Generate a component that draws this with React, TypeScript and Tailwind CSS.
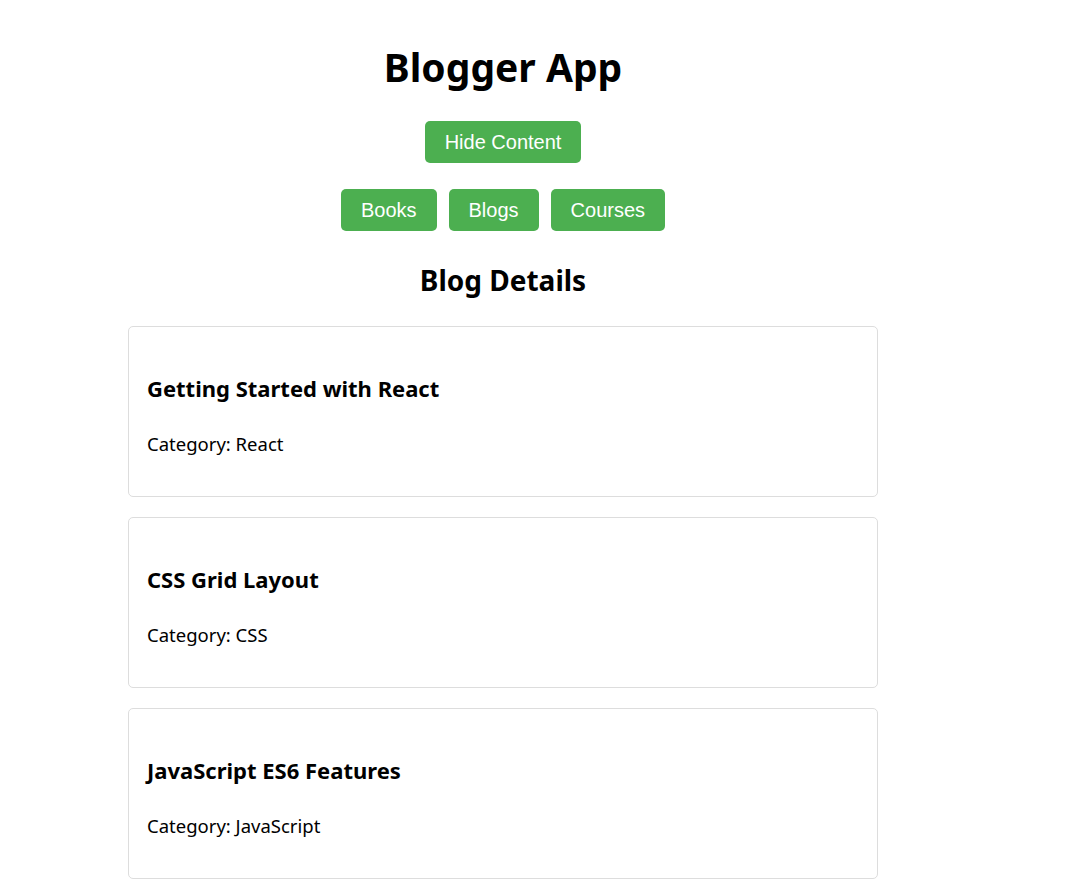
import React, { useState } from 'react';

interface Blog {
  id: number;
  title: string;
  category: string;
}

const blogs: Blog[] = [
  { id: 1, title: 'Getting Started with React', category: 'React' },
  { id: 2, title: 'CSS Grid Layout', category: 'CSS' },
  { id: 3, title: 'JavaScript ES6 Features', category: 'JavaScript' },
];

const btn =
  "bg-[#4caf50] text-white rounded-[5px] px-[20px] py-[10px] text-[20px] leading-[22px] font-['Liberation_Sans',Arial,sans-serif]";

const App = () => {
  const [show, setShow] = useState(true);

  return (
    <div className="min-h-screen bg-white text-black font-['Noto_Sans','Open_Sans',sans-serif]">
      <div className="w-[750px] ml-[128px] flex flex-col items-center">
        {/* Header */}
        <h1 className="mt-[44px] text-[39px] leading-[46px] font-bold">Blogger App</h1>

        <button className={`${btn} mt-[31px]`} onClick={() => setShow(!show)}>
          {show ? 'Hide Content' : 'Show Content'}
        </button>

        {/* Category buttons */}
        <div className="flex gap-3 mt-[26px]">
          <button className={btn}>Books</button>
          <button className={btn}>Blogs</button>
          <button className={btn}>Courses</button>
        </div>

        {show && (
          <>
            <h2 className="mt-[30px] text-[28px] leading-[38px] font-bold">Blog Details</h2>

            <div className="w-full flex flex-col gap-[20px] mt-[27px] pb-4">
              {blogs.map((blog) => (
                <div
                  key={blog.id}
                  className="border border-[#dddddd] rounded-[5px] px-[18px] pt-[47px] pb-[40px]"
                >
                  <h3 className="text-[22px] leading-[28px] font-bold">{blog.title}</h3>
                  <p className="mt-[30px] text-[18.5px] leading-[24px]">Category: {blog.category}</p>
                </div>
              ))}
            </div>
          </>
        )}
      </div>
    </div>
  );
};

export default App;
